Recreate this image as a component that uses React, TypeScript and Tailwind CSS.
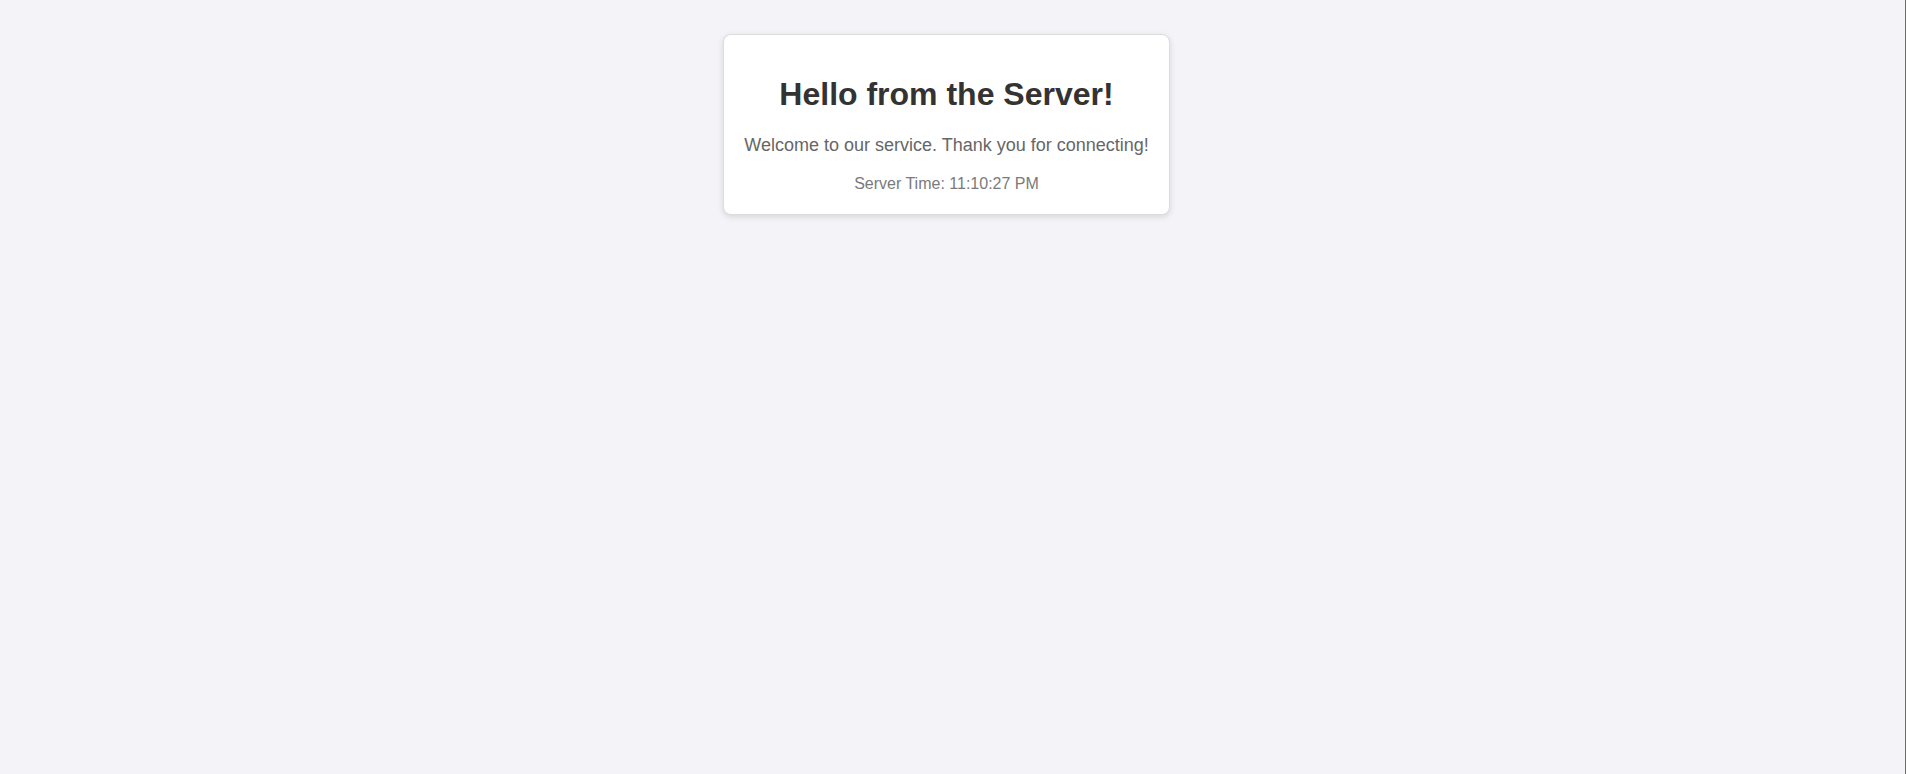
export default function App() {
  return (
    <div
      className="min-h-screen bg-[#f4f4f8] border-r border-[#6b6b6b] pr-3 pt-[34px] flex justify-center items-start"
      style={{ fontFamily: '"Liberation Sans", Arial, sans-serif' }}
    >
      <div className="w-fit whitespace-nowrap bg-white border border-[#dcdcdc] rounded-lg shadow-[0_2px_6px_rgba(0,0,0,0.12)] px-5 pt-5 pb-5 text-center">
        <h1 className="text-[32px] leading-[36.8px] font-bold text-[#333333] my-[21.44px]">
          Hello from the Server!
        </h1>
        <p className="text-[18px] leading-[20.7px] text-[#666666]">
          Welcome to our service. Thank you for connecting!
        </p>
        <div className="mt-5 text-[16px] leading-[18.4px] text-[#7a7a7a]">
          Server Time: 11:10:27 PM
        </div>
      </div>
    </div>
  );
}
